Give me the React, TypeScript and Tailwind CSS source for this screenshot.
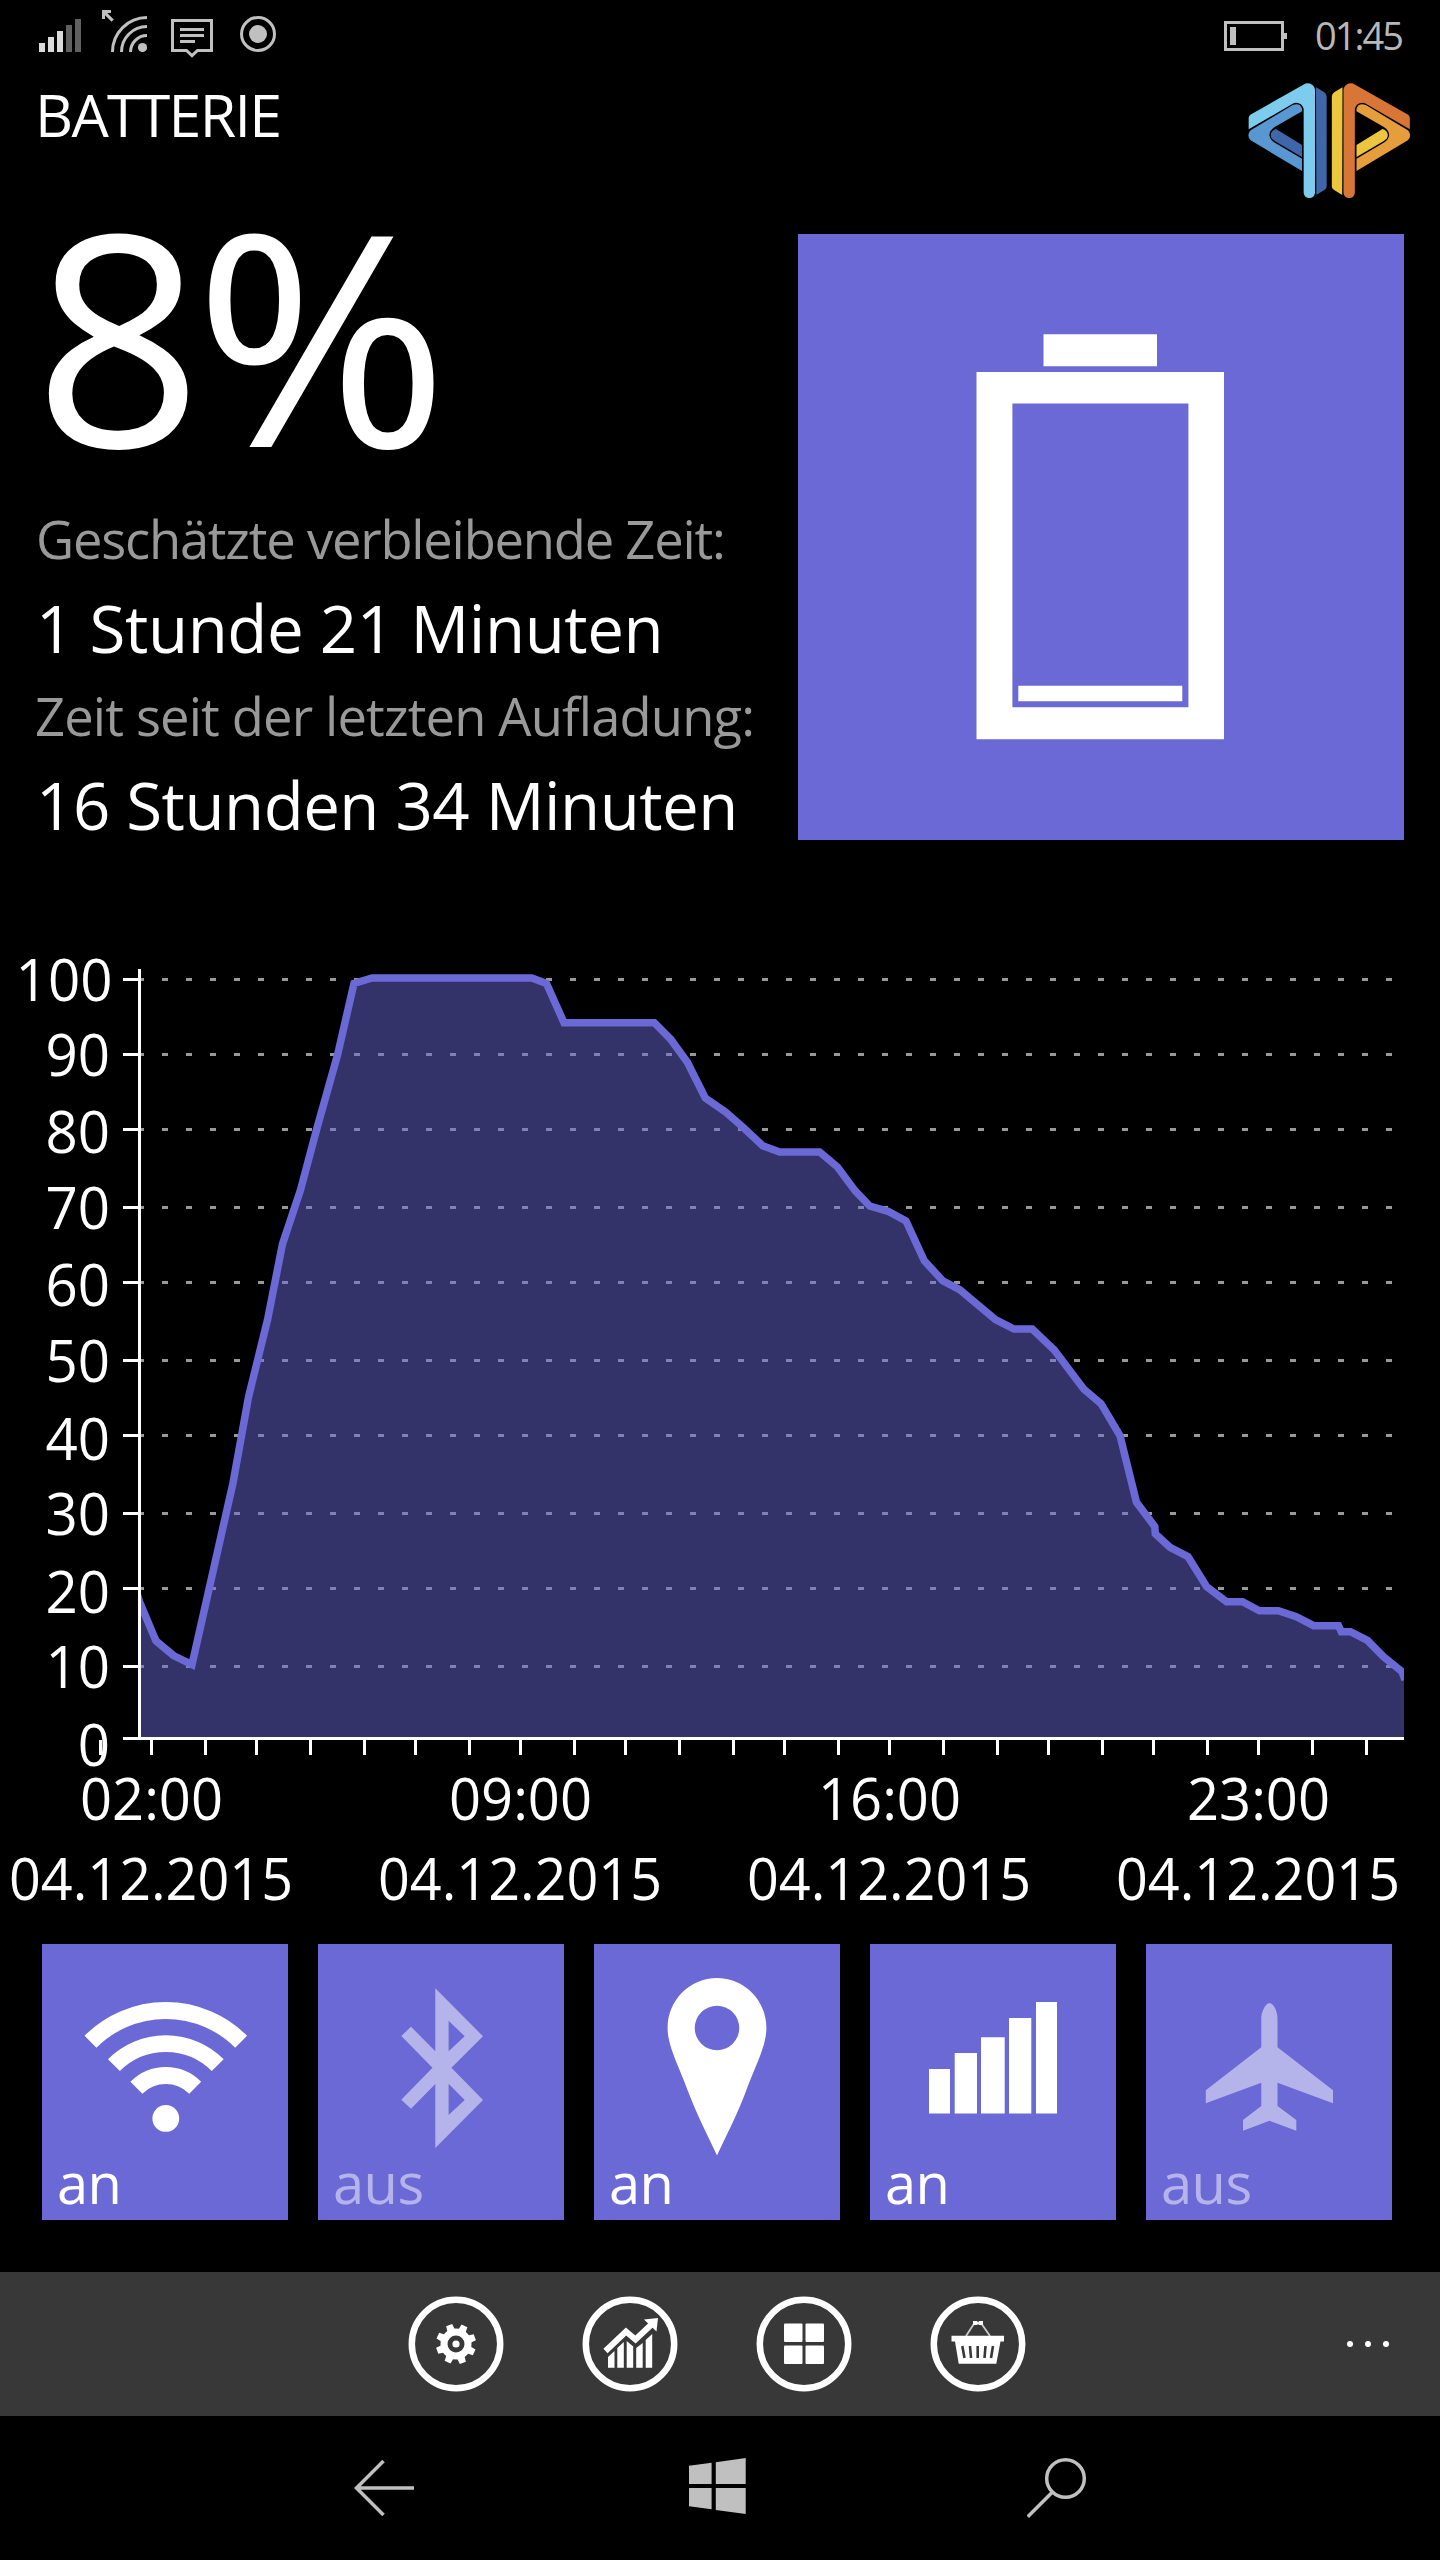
import type { ReactNode } from "react";
import clsx from "clsx";

const ACCENT = "#6b69d6";

// y position and label baseline for each step of the percentage axis
const yAxis = [
  { value: 100, y: 979.5, baseline: 1000.5 },
  { value: 90, y: 1054.5, baseline: 1075.5 },
  { value: 80, y: 1129.5, baseline: 1153 },
  { value: 70, y: 1207.5, baseline: 1229 },
  { value: 60, y: 1282.5, baseline: 1306 },
  { value: 50, y: 1360.5, baseline: 1381.5 },
  { value: 40, y: 1435.5, baseline: 1459.5 },
  { value: 30, y: 1513.5, baseline: 1534.5 },
  { value: 20, y: 1588.5, baseline: 1612.5 },
  { value: 10, y: 1666.5, baseline: 1687.5 },
  { value: 0, y: 1738.5, baseline: 1765.5 },
];

const hourTicks = [
  100.5, 151.5, 205.5, 256.5, 310.5, 364.5, 415.5, 469.5, 520.5, 574.5, 625.5, 679.5, 733.5,
  784.5, 838.5, 889.5, 943.5, 997.5, 1048.5, 1102.5, 1153.5, 1207.5, 1258.5, 1312.5, 1366.5,
];

const timeLabels = [
  { x: 151.5, time: "02:00", date: "04.12.2015" },
  { x: 520.5, time: "09:00", date: "04.12.2015" },
  { x: 889.5, time: "16:00", date: "04.12.2015" },
  { x: 1258.5, time: "23:00", date: "04.12.2015" },
];

const levels: [number, number][] = [
  [130, 1571], [140, 1603], [156, 1641], [173.5, 1655.5], [192, 1664.5], [233, 1483], [248.5, 1397],
  [267.5, 1320], [282.5, 1244], [300.5, 1190], [317, 1128], [337.5, 1055], [354, 983.5], [372, 978],
  [531.7, 978], [546.5, 983.5], [564, 1022.7], [654.3, 1022.7], [670.5, 1039], [687.4, 1062.3],
  [705.3, 1098], [725.5, 1112], [743, 1127.3], [762.7, 1145.7], [779.7, 1152], [819.6, 1152],
  [837.5, 1167], [855, 1190.7], [869.7, 1206], [888, 1211.3], [906, 1221], [924.3, 1260.7],
  [942.7, 1280.7], [959.7, 1289.7], [995.5, 1319.7], [1014, 1329], [1032.2, 1329], [1054.3, 1350],
  [1083.7, 1389], [1101, 1403.7], [1120, 1435.7], [1136.5, 1502.3], [1154.8, 1526.7],
  [1155.3, 1533.7], [1170, 1547.3], [1188, 1556.7], [1206.7, 1586.7], [1226.5, 1601.7],
  [1242.5, 1601.7], [1259.5, 1610.7], [1278.4, 1610.7], [1296.3, 1616.7], [1313.7, 1625.7],
  [1338.5, 1625.7], [1341.3, 1631.7], [1350.5, 1631.7], [1367.4, 1640.3], [1383.5, 1656.7],
  [1402, 1671.7], [1405, 1680],
];

function StatusBar() {
  return (
    <div className="flex h-[70px] shrink-0 items-start pr-9 pl-[39px]">
      {/* Mobilfunk */}
      <svg className="mt-[19px] h-[33px] w-[42px]" viewBox="0 0 42 33">
        <path d="M0 24h6v9H0zM9 18h6v15H9zM18 12h6v21h-6z" fill="#dadada" />
        <path d="M27 6h6v27h-6zM36 0h6v33h-6z" fill="#606060" />
      </svg>
      {/* WLAN */}
      <svg className="mt-[10px] ml-[21px] h-[42px] w-[45px]" viewBox="0 0 45 42">
        <path d="M0 0h9v3H5.2l6.6 6.6-2.2 2.2L3 5.2V9H0z" fill="#c0c0c0" />
        <g fill="none" stroke="#c0c0c0" strokeWidth="3">
          <path d="M10.500 42A34.500 34.500 0 0 1 45 7.500" />
          <path d="M19.500 42A25.500 25.500 0 0 1 45 16.500" />
          <path d="M28.500 42A16.500 16.500 0 0 1 45 25.500" />
        </g>
        <circle cx="40.500" cy="37.500" r="4.600" fill="#c0c0c0" />
      </svg>
      {/* Nachricht */}
      <svg className="mt-[19px] ml-6 h-[39px] w-[42px]" viewBox="0 0 42 39">
        <path
          d="M1.500 1.500h39v30H26.500L21 36.700l-5.500-5.200H1.500z"
          fill="none"
          stroke="#c0c0c0"
          strokeWidth="3"
        />
        <path d="M9 9h24v3H9zM9 15h24v3H9zM9 21h15v3H9z" fill="#c0c0c0" />
      </svg>
      {/* Aufnahme */}
      <svg className="mt-4 ml-[27px] h-9 w-9" viewBox="0 0 36 36">
        <circle cx="18" cy="18" r="16.500" fill="none" stroke="#c0c0c0" strokeWidth="3" />
        <circle cx="18" cy="18" r="9" fill="#c0c0c0" />
      </svg>
      <svg className="mt-[21px] ml-auto h-[30px] w-[63px]" viewBox="0 0 63 30">
        <path d="M1.500 1.500h57v27h-57z" fill="none" stroke="#c0c0c0" strokeWidth="3" />
        <path d="M6 6h6v18H6zM60 12h3v6h-3z" fill="#c0c0c0" />
      </svg>
      <span className="ml-7 w-[89px] text-[38px] leading-[70px] tracking-[-2px] whitespace-nowrap text-[#b8b8b8]">
        01:45
      </span>
    </div>
  );
}

function LogoHalf({ light, mid, dark }: { light: string; mid: string; dark: string }) {
  return (
    <>
      <path
        d="M206 388V354Q206 348 211 344L370 254Q384 246 396 254Q405 260 405 271V578Q403 594 388 594Q373 594 371 578V326Q366 308 348 308Q343 308 338 311Z"
        fill={light}
      />
      <path
        d="M338 315Q360 307 366 326V334L284 381Q268 391 268 406Q270 419 282 427L366 476V513L212 421Q205 415 205 405Q206 396 212 391Z"
        fill={mid}
      />
      <path d="M288 387L366 435V471L284 423Q272 415 272 405Q274 391 288 387Z" fill={dark} />
      <path d="M408 262L433 277Q440 282 440 290V560Q440 566 433 570L409 585Z" fill={dark} />
    </>
  );
}

function Logo() {
  return (
    <svg className="mt-[10px] h-[122px] w-[168px]" viewBox="195 240 504 366">
      <LogoHalf light="#7dccee" mid="#5897d1" dark="#4066aa" />
      <g transform="translate(895.500 0) scale(-1 1)">
        <LogoHalf light="#d77637" mid="#e59e3b" dark="#edc640" />
      </g>
    </svg>
  );
}

function Summary() {
  return (
    <section className="flex h-[606px] shrink-0 justify-between pr-9 pl-[35px]">
      <div className="whitespace-nowrap text-white">
        <p className="-ml-px text-[295px] leading-[197px] tracking-[-9px]">
          8<span className="inline-block origin-left scale-x-[1.045]">%</span>
        </p>
        <p className="mt-[70px] ml-px text-[52.5px] leading-[76px] tracking-[-1.22px] text-[#999]">
          Geschätzte verbleibende Zeit:
        </p>
        <p className="ml-px text-[65.4px] leading-[101px] tracking-[-0.4px]">1 Stunde 21 Minuten</p>
        <p className="text-[52.5px] leading-[76px] tracking-[-0.85px] text-[#999]">
          Zeit seit der letzten Aufladung:
        </p>
        <p className="ml-px text-[65.4px] leading-[101px] tracking-[-0.5px]">
          16 Stunden 34 Minuten
        </p>
      </div>
      <svg className="h-[606px] w-[606px] bg-[#6b69d6]" viewBox="0 0 606 606">
        <g fill="#fff">
          <path d="M245.500 100.300h113.500v32H245.500z" />
          <path
            d="M178.500 138h247.500v367.200H178.500zM214.400 169.400v303.800h176V169.400z"
            fillRule="evenodd"
          />
          <path d="M220.300 451.700h164v15.500h-164z" />
        </g>
      </svg>
    </section>
  );
}

function Chart() {
  const line = levels.map(([x, y]) => `${x},${y}`).join(" ");

  return (
    <svg className="block h-[1104px] w-[1440px] shrink-0" viewBox="0 840 1440 1104">
      <clipPath id="plot">
        <rect x="141" y="960" width="1263" height="777" />
      </clipPath>
      <g stroke="#999" strokeWidth="3" strokeDasharray="6 18">
        {yAxis.slice(0, -1).map(({ value, y }) => (
          <path key={value} d={`M138 ${y}H1404`} />
        ))}
      </g>
      <g clipPath="url(#plot)">
        <polygon points={`130,1740 ${line} 1405,1740`} fill={ACCENT} fillOpacity="0.49" />
        <polyline points={line} fill="none" stroke={ACCENT} strokeWidth="7.500" />
      </g>
      <g stroke="#fff" strokeWidth="3">
        <path d="M139.500 969V1740M123 1738.500H1404" />
        {yAxis.map(({ value, y }) => (
          <path key={value} d={`M123 ${y}H139`} />
        ))}
        {hourTicks.map((x) => (
          <path key={x} d={`M${x} 1740V1755`} />
        ))}
      </g>
      <g fill="#fff" fontSize="59">
        {yAxis.map(({ value, baseline }) => (
          <text
            key={value}
            x={value === 100 ? 112.5 : 110}
            y={baseline}
            textAnchor="end"
            textLength={String(value).length * 32.3}
            lengthAdjust="spacingAndGlyphs"
          >
            {value}
          </text>
        ))}
        {timeLabels.map(({ x, time, date }) => (
          <g key={x} textAnchor="middle">
            <text x={x} y="1819.500" textLength="143" lengthAdjust="spacingAndGlyphs">
              {time}
            </text>
            <text x={x - 0.5} y="1900" textLength="284" lengthAdjust="spacingAndGlyphs">
              {date}
            </text>
          </g>
        ))}
      </g>
    </svg>
  );
}

function Tile({ on, children }: { on?: boolean; children: ReactNode }) {
  return (
    <div className="h-[276px] w-[246px] bg-[#6b69d6] text-white">
      <div className={clsx(!on && "opacity-50")}>
        <svg className="block h-[212px] w-[246px]" viewBox="0 0 246 212" fill="currentColor">
          {children}
        </svg>
        <p className="pl-[15px] text-[56px] leading-[53px] tracking-[-0.5px]">
          {on ? "an" : "aus"}
        </p>
      </div>
    </div>
  );
}

function Tiles() {
  return (
    <section className="flex h-[328px] shrink-0 gap-[30px] pl-[42px]">
      <Tile on>
        <g fill="none" stroke="currentColor" strokeWidth="16.800">
          <path d="M48.500 97.700A106.500 106.500 0 0 1 199.100 97.700" />
          <path d="M71.900 121.100A73.400 73.400 0 0 1 175.700 121.100" />
          <path d="M94.400 143.700A41.500 41.500 0 0 1 153.200 143.700" />
        </g>
        <circle cx="123.800" cy="174.400" r="13.400" />
      </Tile>
      <Tile>
        <path
          fillRule="evenodd"
          d="M117.300 44.300L165 92.300 133.400 123.700 165 156 117.300 204V140L93 164.700 83.300 155.700 114.500 123.700 83.300 92 93 82.700 117.300 107.300ZM130.600 76.700V107.300L146.700 92.300ZM130.600 139.700V171L146.700 156Z"
        />
      </Tile>
      <Tile on>
        <path
          fillRule="evenodd"
          d="M123 34C96 34 73.600 56 73.600 84C73.600 102 84 120 94.700 149C103 171 113 190 123 211.500C133 190 143 171 151.300 149C162 120 172.400 102 172.400 84C172.400 56 150 34 123 34ZM123 61.700A22.200 22.200 0 1 1 123 106.200A22.200 22.200 0 1 1 123 61.700Z"
        />
      </Tile>
      <Tile on>
        <path d="M59 125h21v44.500H59zM84.700 109h22.300v60.500H84.700zM111 93.300h23.700v76.200H111zM139 74h22.300v95.500H139zM166 58h21v111.500h-21z" />
      </Tile>
      <Tile>
        <path d="M123.500 59C118 60 115.300 70 115.300 74V103.300L59.800 146.300V159.300L115.300 138.700V162L97 176V186.700L123.500 176.700 150.300 186.700V176L131.500 162V138.700L187 159.300V146.300L131.500 103.300V74C131.500 70 129 60 123.500 59Z" />
      </Tile>
    </section>
  );
}

function RoundButton({ children }: { children: ReactNode }) {
  return (
    <svg className="h-24 w-24" viewBox="0 0 96 96" fill="#fff">
      <circle cx="48" cy="48" r="44.200" fill="none" stroke="#fff" strokeWidth="6.500" />
      {children}
    </svg>
  );
}

function AppBar() {
  return (
    <div className="flex h-36 shrink-0 items-center gap-[78px] bg-[#383838] pr-[51px] pl-[407.5px]">
      {/* Einstellungen */}
      <RoundButton>
        <circle cx="48" cy="48" r="12" fill="none" stroke="#fff" strokeWidth="7" />
        <circle cx="48" cy="48" r="3.600" />
        {[-20, 25, 70, 115, 160, 205, 250, 295].map((angle) => (
          <path key={angle} d="M44 35L44.800 28h6.400L52 35z" transform={`rotate(${angle} 48 48)`} />
        ))}
      </RoundButton>
      {/* Statistik */}
      <RoundButton>
        <path
          d="M23.500 55L44 35.500 53.500 43.500 70 28"
          fill="none"
          stroke="#fff"
          strokeWidth="6"
        />
        <path d="M62 23.500L76 22 74.500 35.500z" />
        <path d="M26 71.700V61l6.500-6v16.700zM35.300 71.700V52l6.500-6v25.700zM44.700 71.700V45l6.500 5.500v21.200zM54.200 71.700V52l6.500-5v24.700zM63.700 71.700V44l6.500-6v33.700z" />
      </RoundButton>
      {/* Kacheln */}
      <RoundButton>
        <rect x="28" y="27.500" width="18.500" height="18.500" rx="1" />
        <rect x="49.500" y="27.500" width="18.500" height="18.500" rx="1" />
        <rect x="28" y="49.500" width="18.500" height="18.500" rx="1" />
        <rect x="49.500" y="49.500" width="18.500" height="18.500" rx="1" />
      </RoundButton>
      {/* Shop */}
      <RoundButton>
        <path d="M36 40L43.500 28.500M60 40L52 28.500" stroke="#ccc" strokeWidth="1.800" />
        <path d="M43 25h4l1 1.500 1-1.500h4v4h-4l-1-1-1 1h-4z" />
        <path d="M21.500 39.700h52.500v5.800H70.500L66.300 67.700H28.700L25 45.500H21.500z" />
        <path
          d="M32.300 50L34.500 62M40 50L41 62M47.700 50V62M55.500 50L54.500 62M63 50L61 62"
          stroke="#383838"
          strokeWidth="2.600"
        />
      </RoundButton>
      <svg className="ml-auto h-[6px] w-[42px]" viewBox="0 0 42 6" fill="#fff">
        <circle cx="3" cy="3" r="3" />
        <circle cx="21" cy="3" r="3" />
        <circle cx="39" cy="3" r="3" />
      </svg>
    </div>
  );
}

function NavBar() {
  return (
    <nav className="flex h-36 shrink-0 items-start pt-10 pl-[354px]">
      <svg className="h-[64px] w-[60px]" viewBox="0 0 60 64">
        <path
          d="M60 32H2.500M29.500 5L2.500 32L29.500 59"
          fill="none"
          stroke="#c0c0c0"
          strokeWidth="3.500"
        />
      </svg>
      <svg className="ml-[275px] h-[64px] w-[57px]" viewBox="0 0 57 64" fill="#c0c0c0">
        <path d="M0 9.700L22.600 6.700V28H0zM26.800 6.200L56.700 2V28H26.800zM0 32H22.600V53.200L0 50.300zM26.800 32H56.700V58L26.800 54z" />
      </svg>
      <svg className="ml-[281px] h-[64px] w-[60px]" viewBox="0 0 60 64">
        <g fill="none" stroke="#c0c0c0" strokeWidth="3.500">
          <circle cx="38.500" cy="22.500" r="18.800" />
          <path d="M25.500 36L0.800 60.700" />
        </g>
      </svg>
    </nav>
  );
}

export default function App() {
  return (
    <div className="flex h-[2560px] w-[1440px] flex-col overflow-hidden bg-black font-['Open_Sans','Noto_Sans',sans-serif]">
      <StatusBar />
      <header className="flex h-[164px] shrink-0 items-start justify-between pr-[27px] pl-[35px]">
        <h1 className="text-[59px] leading-[88px] tracking-[-1.7px] text-white">BATTERIE</h1>
        <Logo />
      </header>
      <Summary />
      <Chart />
      <Tiles />
      <AppBar />
      <NavBar />
    </div>
  );
}
